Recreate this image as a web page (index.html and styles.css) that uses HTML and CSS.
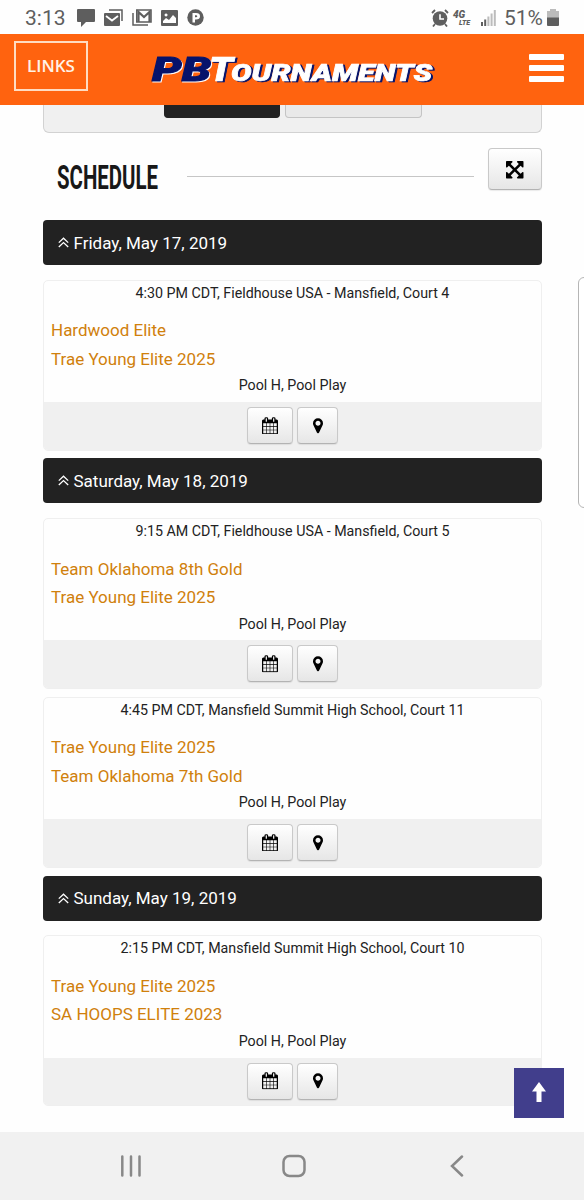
FILE: index.html
```html
<!DOCTYPE html>
<html lang="en">

<head>
    <meta charset="UTF-8">
    <meta name="viewport" content="width=device-width, initial-scale=1.0">
    <title>PBTournaments</title>
    <link rel="stylesheet" href="styles.css">
</head>

<body>
    <svg class="sprite">
        <symbol id="calendar" viewBox="0 0 1664 1792">
            <path d="M128 1664h288v-288h-288v288zm352 0h320v-288h-320v288zm-352-352h288v-320h-288v320zm352 0h320v-320h-320v320zm-352-384h288v-288h-288v288zm736 736h320v-288h-320v288zm-384-736h320v-288h-320v288zm768 736h288v-288h-288v288zm-384-352h320v-320h-320v320zm-352-864v-288q0-13-9.500-22.500t-22.500-9.500h-64q-13 0-22.500 9.500t-9.500 22.500v288q0 13 9.500 22.500t22.500 9.500h64q13 0 22.500-9.500t9.500-22.500zm736 864h288v-320h-288v320zm-384-384h320v-288h-320v288zm384 0h288v-288h-288v288zm32-480v-288q0-13-9.500-22.500t-22.500-9.500h-64q-13 0-22.500 9.500t-9.500 22.500v288q0 13 9.500 22.500t22.500 9.500h64q13 0 22.500-9.500t9.500-22.500zm384-64v1280q0 52-38 90t-90 38h-1408q-52 0-90-38t-38-90v-1280q0-52 38-90t90-38h128v-96q0-66 47-113t113-47h64q66 0 113 47t47 113v96h384v-96q0-66 47-113t113-47h64q66 0 113 47t47 113v96h128q52 0 90 38t38 90z" />
        </symbol>
        <symbol id="marker" viewBox="0 0 1024 1792">
            <path d="M768 640q0-106-75-181t-181-75-181 75-75 181 75 181 181 75 181-75 75-181zm256 0q0 109-33 179l-364 774q-16 33-47.500 52t-67.500 19-67.500-19-46.500-52l-365-774q-33-70-33-179 0-212 150-362t362-150 362 150 150 362z" />
        </symbol>
        <symbol id="chevrons" viewBox="0 0 11 11">
            <path d="M.8 5.600 5.500 1.200l4.700 4.400M.8 10 5.500 5.600l4.700 4.400" fill="none" stroke="#fff" stroke-width="1.300" />
        </symbol>
    </svg>

    <div class="status">
        <span class="clock">3:13</span>
        <div class="notifications">
            <svg width="18" height="18" viewBox="0 0 18 18">
                <path d="M1 0h16q1 0 1 1v11q0 1-1 1H9l-5 5v-5H1q-1 0-1-1V1q0-1 1-1z" />
            </svg>
            <svg width="19" height="17" viewBox="0 0 19 17">
                <path d="M5 1h13v11" fill="none" stroke="#5e5e5e" stroke-width="1.500" />
                <path d="M1 4h14q1 0 1 1v11q0 1-1 1H1q-1 0-1-1V5q0-1 1-1z" />
                <path d="m2 7 6 4.500L14 7" fill="none" stroke="#fff" stroke-width="1.800" />
            </svg>
            <svg width="20" height="17" viewBox="0 0 20 17">
                <path d="M1 4v12h15" fill="none" stroke="#5e5e5e" stroke-width="1.500" />
                <path d="M4.800 13V1H19v12z" fill="none" stroke="#5e5e5e" stroke-width="1.600" />
                <path d="M6.500 13V3L12 8l5.500-5v10" fill="none" stroke="#5e5e5e" stroke-width="2.200" />
            </svg>
            <svg width="17" height="16" viewBox="0 0 17 16">
                <path fill-rule="evenodd" d="M1 0h15q1 0 1 1v14q0 1-1 1H1q-1 0-1-1V1q0-1 1-1zm1 13h13V8l-3-3-4 5-3-2-3 3zM5 3.500a1.500 1.500 0 1 0 .1 0z" />
            </svg>
            <svg width="17" height="17" viewBox="0 0 17 17">
                <circle cx="8.500" cy="8.500" r="8.200" />
                <path fill-rule="evenodd" d="M5.500 13.500V4H9q4 0 4 3.200t-4 3.300H8v3zM8 6.300v2h1q1.300 0 1.300-1T9 6.300z" fill="#fff" />
            </svg>
        </div>
        <div class="signals">
            <svg width="18" height="18" viewBox="0 0 18 18">
                <circle cx="9" cy="9.500" r="7.300" />
                <path d="m1 4 3-3M17 4l-3-3M4 15l-2 2.500M14 15l2 2.500" stroke="#5e5e5e" stroke-width="1.800" />
                <path d="M9 5.200v4.800h4" fill="none" stroke="#fff" stroke-width="1.600" />
            </svg>
            <span class="network">4G<small>LTE</small></span>
            <svg width="15" height="16" viewBox="0 0 15 16">
                <path d="M0 12h2v4H0zM3.200 9.500h2V16h-2z" />
                <path d="M6.400 6.500h2V16h-2zM9.600 3.500h2V16h-2zM12.800 0h2v16h-2z" fill="#bcbcbc" />
            </svg>
            <span class="percent">51%</span>
            <svg width="12" height="17" viewBox="0 0 12 17">
                <path d="M3 0h6v2h3v7H0V2h3z" fill="#bcbcbc" />
                <path d="M0 8.500h12V16q0 1-1 1H1q-1 0-1-1z" />
            </svg>
        </div>
    </div>

    <header>
        <a class="links">LINKS</a>
        <svg class="logo" width="290" height="44" viewBox="0 0 290 44">
            <text class="pb" x="3" y="33" textLength="59" lengthAdjust="spacingAndGlyphs">PB</text>
            <text class="rest" y="33"><tspan class="t" x="60" textLength="24" lengthAdjust="spacingAndGlyphs">T</tspan><tspan x="82" textLength="201" lengthAdjust="spacingAndGlyphs">OURNAMENTS</tspan></text>
        </svg>
        <div class="menu">
            <span></span>
            <span></span>
            <span></span>
        </div>
    </header>

    <main>
        <div class="tabs">
            <div class="tab active"></div>
            <div class="tab"></div>
        </div>

        <div class="title">
            <svg width="104" height="52" viewBox="0 0 104 52">
                <text x="1" y="41" textLength="101" lengthAdjust="spacingAndGlyphs">SCHEDULE</text>
            </svg>
            <hr>
            <a class="button expand">
                <svg width="17.500" height="20.400" viewBox="0 0 1536 1792">
                    <path d="M1283 413l-355 355 355 355 144-144q29-31 70-14 39 17 39 59v448q0 26-19 45t-45 19h-448q-42 0-59-40-17-39 14-69l144-144-355-355-355 355 144 144q31 30 14 69-17 40-59 40h-448q-26 0-45-19t-19-45v-448q0-42 40-59 39-17 69 14l144 144 355-355-355-355-144 144q-19 19-45 19-12 0-24-5-40-17-40-59v-448q0-26 19-45t45-19h448q42 0 59 40 17 39-14 69l-144 144 355 355 355-355-144-144q-31-30-14-69 17-40 59-40h448q26 0 45 19t19 45v448q0 42-39 59-13 5-25 5-26 0-45-19z" />
                </svg>
            </a>
        </div>

        <div class="day"><svg><use href="#chevrons" /></svg>Friday, May 17, 2019</div>
        <div class="game">
            <p class="time">4:30 PM CDT, Fieldhouse USA - Mansfield, Court 4</p>
            <a class="team">Hardwood Elite</a>
            <a class="team">Trae Young Elite 2025</a>
            <p class="pool">Pool H, Pool Play</p>
            <div class="actions">
                <a class="button calendar"><svg><use href="#calendar" /></svg></a>
                <a class="button marker"><svg><use href="#marker" /></svg></a>
            </div>
        </div>

        <div class="day"><svg><use href="#chevrons" /></svg>Saturday, May 18, 2019</div>
        <div class="game">
            <p class="time">9:15 AM CDT, Fieldhouse USA - Mansfield, Court 5</p>
            <a class="team">Team Oklahoma 8th Gold</a>
            <a class="team">Trae Young Elite 2025</a>
            <p class="pool">Pool H, Pool Play</p>
            <div class="actions">
                <a class="button calendar"><svg><use href="#calendar" /></svg></a>
                <a class="button marker"><svg><use href="#marker" /></svg></a>
            </div>
        </div>
        <div class="game">
            <p class="time">4:45 PM CDT, Mansfield Summit High School, Court 11</p>
            <a class="team">Trae Young Elite 2025</a>
            <a class="team">Team Oklahoma 7th Gold</a>
            <p class="pool">Pool H, Pool Play</p>
            <div class="actions">
                <a class="button calendar"><svg><use href="#calendar" /></svg></a>
                <a class="button marker"><svg><use href="#marker" /></svg></a>
            </div>
        </div>

        <div class="day"><svg><use href="#chevrons" /></svg>Sunday, May 19, 2019</div>
        <div class="game">
            <p class="time">2:15 PM CDT, Mansfield Summit High School, Court 10</p>
            <a class="team">Trae Young Elite 2025</a>
            <a class="team">SA HOOPS ELITE 2023</a>
            <p class="pool">Pool H, Pool Play</p>
            <div class="actions">
                <a class="button calendar"><svg><use href="#calendar" /></svg></a>
                <a class="button marker"><svg><use href="#marker" /></svg></a>
            </div>
        </div>
    </main>

    <nav>
        <svg width="22" height="22" viewBox="0 0 22 22">
            <path d="M2.300 1.500v19M11 1.500v19M19.500 1.500v19" />
        </svg>
        <svg class="home" width="24" height="24" viewBox="0 0 24 24">
            <rect x="1.500" y="2" width="21" height="20" rx="6" />
        </svg>
        <svg width="14" height="22" viewBox="0 0 14 22">
            <path d="M12 1.500 2 11l10 9.500" />
        </svg>
    </nav>

    <div class="edge"></div>
    <a class="top">
        <svg width="14" height="20" viewBox="0 0 14 20">
            <path d="M7 0l7 9.500H9.500V20h-5V9.500H0z" fill="#fff" />
        </svg>
    </a>
</body>

</html>
```
FILE: styles.css
```css
* {
    box-sizing: border-box;
}

body {
    position: relative;
    display: flex;
    flex-direction: column;
    width: 584px;
    height: 1200px;
    margin: 0;
    overflow: hidden;
    background-color: #fefefe;
    font-family: Roboto, Arial, sans-serif;
    color: #222;
}

svg {
    display: block;
    flex: none;
}

.sprite {
    display: none;
}

/* phone status bar */
.status {
    display: flex;
    align-items: center;
    flex: none;
    height: 34px;
    padding: 1px 25px 0;
    fill: #5e5e5e;
    color: #5e5e5e;
    font-size: 21px;
}

.clock {
    width: 52px;
}

.notifications {
    display: flex;
    align-items: center;
    gap: 9px;
}

.signals {
    display: flex;
    align-items: center;
    margin-left: auto;
}

.network {
    width: 19px;
    margin: 1px 9px 0 4px;
    font-size: 10px;
    font-weight: 900;
    font-style: italic;
    line-height: 10px;
}

.network small {
    display: block;
    margin-left: 6px;
    font-size: 7px;
    line-height: 7px;
}

.percent {
    width: 43px;
    margin-left: 8px;
}

/* site header */
header {
    display: flex;
    align-items: flex-start;
    flex: none;
    height: 71px;
    padding: 7px 20px 0 14px;
    background-color: #ff630f;
}

.links {
    width: 74px;
    height: 50px;
    border: 2px solid #ffdcc2;
    font: 600 17px/46px "Open Sans", sans-serif;
    color: #fff2e6;
    text-align: center;
}

.logo {
    margin: 7px 0 0 61px;
    font-size: 23.500px;
    font-weight: 900;
    font-style: italic;
}

.logo .pb,
.logo .t {
    font-size: 33px;
}

.pb {
    fill: #06136b;
    stroke: #06136b;
    stroke-width: 1;
    filter: drop-shadow(1.500px 1px 0 #fff);
}

.rest {
    fill: #fff;
    stroke: #fff;
    stroke-width: .7;
    filter: drop-shadow(2px 1.500px 0 #06136b);
}

.menu {
    display: flex;
    flex-direction: column;
    gap: 5px;
    margin: 13px 0 0 auto;
}

.menu span {
    width: 35px;
    height: 6px;
    border-radius: 1px;
    background-color: #fff;
}

/* page */
main {
    flex: 1;
    padding: 0 42px 0 43px;
    overflow: hidden;
}

.tabs {
    display: flex;
    justify-content: center;
    gap: 5px;
    height: 28px;
    border: 1px solid #d2d2d2;
    border-top: 0;
    border-radius: 0 0 6px 6px;
    background-color: #f0f0f0;
}

.tab {
    width: 137px;
    height: 13px;
    border: 1px solid #c4c4c4;
    border-top: 0;
    border-radius: 0 0 4px 4px;
    background-color: #e9e9e9;
}

.tab.active {
    width: 116px;
    border-color: #222;
    background-color: #222;
}

.title {
    display: flex;
    height: 42px;
    margin: 15px 0 30px;
    padding-left: 13px;
}

.title text {
    font-size: 32.500px;
    font-weight: 700;
    fill: #181818;
}

.title hr {
    flex: 1;
    height: 1px;
    margin: 28px 14px 0 27px;
    border: 0;
    background-color: #c6c6c6;
}

.button {
    display: flex;
    align-items: center;
    justify-content: center;
    border: 1px solid #c9c9c9;
    border-bottom-color: #b3b3b3;
    border-radius: 4px;
    background-image: linear-gradient(#fff, #e6e6e6);
    box-shadow: 0 1px 1px rgba(0, 0, 0, .08);
    fill: #000;
}

.expand {
    width: 54px;
    height: 42px;
    padding-top: 4px;
}

.day {
    display: flex;
    align-items: center;
    height: 45px;
    margin-bottom: 14.500px;
    padding-left: 15px;
    border-radius: 4px;
    background-color: #222;
    color: #fff;
    font-size: 17px;
}

.day svg {
    width: 11px;
    height: 11px;
    margin-right: 4.500px;
}

.game {
    height: 171px;
    margin-bottom: 7.850px;
    border: 1px solid #efefef;
    border-radius: 5px;
    overflow: hidden;
}

.time,
.pool {
    margin: 0;
    font-size: 14.250px;
    line-height: 25px;
    text-align: center;
}

.time {
    margin-bottom: 10.700px;
}

.team {
    display: block;
    padding-left: 7px;
    color: #d0800c;
    font-size: 17px;
    line-height: 28.500px;
}

.pool {
    line-height: 24.500px;
}

.actions {
    display: flex;
    justify-content: center;
    gap: 4px;
    height: 60px;
    margin-top: 4.300px;
    padding-top: 5px;
    background-color: #f0f0f0;
}

.calendar {
    width: 46px;
    height: 37px;
}

.calendar svg {
    width: 16px;
    height: 17.500px;
}

.marker {
    width: 41px;
    height: 37px;
}

.marker svg {
    width: 10px;
    height: 17.500px;
}

/* phone navigation */
nav {
    display: flex;
    align-items: center;
    justify-content: space-between;
    flex: none;
    height: 68px;
    padding: 0 120px;
    background-color: #f1f1f1;
}

nav svg {
    fill: none;
    stroke: #888;
    stroke-width: 2.500;
    stroke-linecap: round;
}

nav .home {
    margin-right: 5px;
}

.edge {
    position: absolute;
    top: 277px;
    right: -6px;
    width: 12px;
    height: 231px;
    border: 1px solid #b5b5b5;
    border-radius: 6px;
    background-color: #fff;
}

.top {
    position: absolute;
    left: 514px;
    top: 1068px;
    display: flex;
    align-items: center;
    justify-content: center;
    width: 50px;
    height: 50px;
    padding-bottom: 3px;
    background-color: #413e8c;
}
```
